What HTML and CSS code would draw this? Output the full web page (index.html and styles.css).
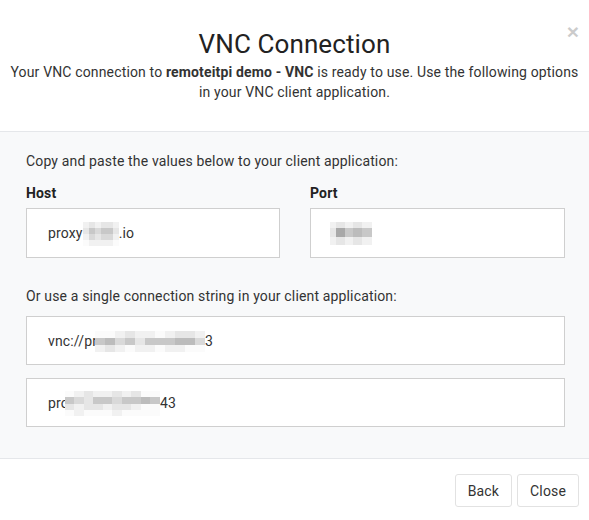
FILE: index.html
```html
<!DOCTYPE html>
<html lang="en">
<head>
<meta charset="utf-8">
<title>VNC Connection</title>
<link rel="stylesheet" href="styles.css">
</head>
<body>
<div class="modal">
  <header class="modal-header">
    <button class="close" type="button" aria-label="Close">×</button>
    <h1 class="modal-title">VNC Connection</h1>
    <p class="modal-sub">Your VNC connection to <strong>remoteitpi demo - VNC</strong> is ready to use. Use the following options in your VNC client application.</p>
  </header>

  <section class="modal-body">
    <p class="hint">Copy and paste the values below to your client application:</p>
    <div class="fields">
      <div class="field">
        <label class="field-label">Host</label>
        <div class="value">proxy<span class="mosaic m-host">
          <i class="a"></i><i class="b"></i><i class="a"></i><i class="b"></i><i class="b"></i><i class="a"></i>
          <i class="b"></i><i class="d"></i><i class="c"></i><i class="d"></i><i class="d"></i><i class="b"></i>
          <i class="a"></i><i class="c"></i><i class="b"></i><i class="c"></i><i class="c"></i><i class="a"></i>
          <i class="w"></i><i class="a"></i><i class="a"></i><i class="a"></i><i class="a"></i><i class="w"></i>
        </span>.io</div>
      </div>
      <div class="field">
        <label class="field-label">Port</label>
        <div class="value value-port"><span class="mosaic m-port">
          <i class="a"></i><i class="b"></i><i class="a"></i><i class="b"></i><i class="a"></i>
          <i class="b"></i><i class="f"></i><i class="d"></i><i class="e"></i><i class="d"></i>
          <i class="a"></i><i class="b"></i><i class="a"></i><i class="b"></i><i class="a"></i>
        </span></div>
      </div>
    </div>

    <p class="hint hint-second">Or use a single connection string in your client application:</p>
    <div class="value value-wide">vnc://pr<span class="mosaic m-url">
      <i class="w"></i><i class="w"></i><i class="a"></i><i class="b"></i><i class="a"></i><i class="a"></i><i class="w"></i><i class="a"></i><i class="b"></i><i class="b"></i><i class="a"></i>
      <i class="d"></i><i class="e"></i><i class="c"></i><i class="d"></i><i class="b"></i><i class="d"></i><i class="d"></i><i class="d"></i><i class="e"></i><i class="e"></i><i class="c"></i>
      <i class="a"></i><i class="b"></i><i class="a"></i><i class="w"></i><i class="a"></i><i class="a"></i><i class="w"></i><i class="a"></i><i class="a"></i><i class="w"></i><i class="w"></i>
    </span>3</div>
    <div class="value value-wide">pro<span class="mosaic m-addr">
      <i class="w"></i><i class="a"></i><i class="b"></i><i class="a"></i><i class="a"></i><i class="b"></i><i class="a"></i><i class="b"></i><i class="w"></i><i class="w"></i>
      <i class="d"></i><i class="c"></i><i class="b"></i><i class="d"></i><i class="d"></i><i class="c"></i><i class="d"></i><i class="d"></i><i class="e"></i><i class="d"></i>
      <i class="b"></i><i class="a"></i><i class="b"></i><i class="b"></i><i class="a"></i><i class="b"></i><i class="b"></i><i class="a"></i><i class="w"></i><i class="w"></i>
      <i class="w"></i><i class="a"></i><i class="w"></i><i class="w"></i><i class="w"></i><i class="a"></i><i class="w"></i><i class="w"></i><i class="w"></i><i class="w"></i>
    </span>43</div>
  </section>

  <footer class="modal-footer">
    <button class="btn" type="button">Back</button>
    <button class="btn" type="button">Close</button>
  </footer>
</div>
</body>
</html>
```

FILE: styles.css
```css
* { box-sizing: border-box; }

html, body {
  margin: 0;
  padding: 0;
  background: #ffffff;
}

body {
  font-family: Roboto, "Liberation Sans", Arial, sans-serif;
  font-size: 14px;
  line-height: 20px;
  letter-spacing: 0.15px;
  color: #333333;
}

.modal {
  width: 589px;
  background: #ffffff;
}

.modal-header {
  position: relative;
  padding: 29px 8px 29px;
  text-align: center;
  border-bottom: 1px solid #e5e7ea;
}

.close {
  position: absolute;
  top: 21px;
  right: 10px;
  margin: 0;
  padding: 0;
  border: 0;
  background: transparent;
  font-family: "Liberation Sans", Arial, sans-serif;
  font-size: 21px;
  font-weight: 700;
  line-height: 21px;
  color: #000;
  opacity: 0.2;
  cursor: pointer;
}

.modal-title {
  margin: 0;
  font-size: 26px;
  line-height: 31px;
  font-weight: 400;
  letter-spacing: 0.1px;
  color: #222222;
}

.modal-sub {
  margin: 2px 0 0;
  color: #333333;
}

.modal-sub strong {
  font-weight: 700;
}

.modal-body {
  background: #f8f9fa;
  padding: 19px 24px 31px 26px;
}

.hint {
  margin: 0 0 12px;
  color: #333333;
}

.hint-second {
  margin: 28px 0 10px;
}

.fields {
  display: grid;
  grid-template-columns: 254px 255px;
  column-gap: 30px;
}

.field-label {
  display: block;
  font-weight: 700;
  color: #222222;
  margin-bottom: 5px;
}

.value {
  display: flex;
  align-items: center;
  height: 50px;
  padding: 0 21px;
  background: #ffffff;
  border: 1px solid #cfcfcf;
  color: #333333;
  white-space: nowrap;
}

.value-port {
  padding-left: 19px;
}

.value-wide {
  width: 539px;
  height: 49px;
}

.value-wide + .value-wide {
  margin-top: 13px;
}

.mosaic {
  display: inline-grid;
  flex: none;
}

.mosaic i {
  display: block;
}

.m-host {
  grid-template-columns: repeat(6, 6px);
  grid-auto-rows: 6px;
  margin-top: 1px;
}

.m-port {
  grid-template-columns: 6px 9px 8px 9px 10px;
  grid-template-rows: 6px 9px 8px;
  margin-top: 1px;
}

.m-url {
  grid-template-columns: repeat(11, 10px);
  grid-auto-rows: 7px;
  margin-left: -2px;
  margin-top: 1px;
}

.m-addr {
  grid-template-columns: repeat(10, 9.5px);
  grid-auto-rows: 6.25px;
  margin-left: -4px;
  margin-top: 2px;
}

.w { background: #fbfbfb; }
.a { background: #f1f1f1; }
.b { background: #e6e6e6; }
.c { background: #d9d9d9; }
.d { background: #c8c8c8; }
.e { background: #bcbcbc; }
.f { background: #a8a8a8; }

.modal-footer {
  display: flex;
  justify-content: flex-end;
  gap: 5px;
  padding: 15px 10px 13px;
  border-top: 1px solid #e5e7ea;
}

.btn {
  height: 33px;
  padding: 0 12px;
  font-family: Roboto, "Liberation Sans", Arial, sans-serif;
  font-size: 14px;
  letter-spacing: 0.15px;
  color: #333333;
  background: #ffffff;
  border: 1px solid #e2e2e2;
  border-radius: 3px;
  cursor: pointer;
}
```
